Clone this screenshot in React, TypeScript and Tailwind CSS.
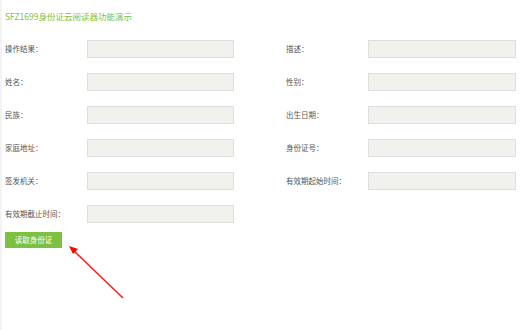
const fields: [string, string][] = [
  ["操作结果：", "描述："],
  ["姓名：", "性别："],
  ["民族：", "出生日期："],
  ["家庭地址：", "身份证号："],
  ["签发机关：", "有效期起始时间："],
  ["有效期截止时间：", ""],
];

function Field({ label, wide }: { label: string; wide?: boolean }) {
  return (
    <div className="flex items-center">
      <span className="w-[82px] shrink-0 text-[7.5px] text-[#555]">{label}</span>
      <div
        className={`h-[18px] border border-[#dedede] bg-[#f1f1ed] ${wide ? "w-[148px]" : "w-[147px]"}`}
      />
    </div>
  );
}

export default function App() {
  return (
    <div
      className="relative h-[330px] w-[520px] overflow-hidden border-l-2 border-[#f3f3f3] bg-white pl-[3px]"
      style={{ fontFamily: '"Noto Sans CJK SC", "Liberation Sans", sans-serif' }}
    >
      <h1 className="pt-[11px] text-[8.5px] leading-[11px] text-[#7dc142]">
        SFZ1699身份证云阅读器功能演示
      </h1>

      <div className="mt-[18px] flex flex-col gap-[15px]">
        {fields.map(([left, right]) => (
          <div key={left} className="flex">
            <Field label={left} />
            {right && (
              <div className="ml-[52px]">
                <Field label={right} wide />
              </div>
            )}
          </div>
        ))}
      </div>

      <button className="mt-[9px] flex h-[16px] w-[57px] items-center justify-center bg-[#7dc142] text-[7.5px] text-white">
        读取身份证
      </button>

      <svg
        className="pointer-events-none absolute left-0 top-0"
        width="520"
        height="330"
        viewBox="0 0 520 330"
      >
        <line x1="121" y1="298" x2="72" y2="251" stroke="#ff1a1a" strokeWidth="1.5" />
        <polygon points="67,246 76,249 71,254" fill="#ff0000" />
      </svg>
    </div>
  );
}
